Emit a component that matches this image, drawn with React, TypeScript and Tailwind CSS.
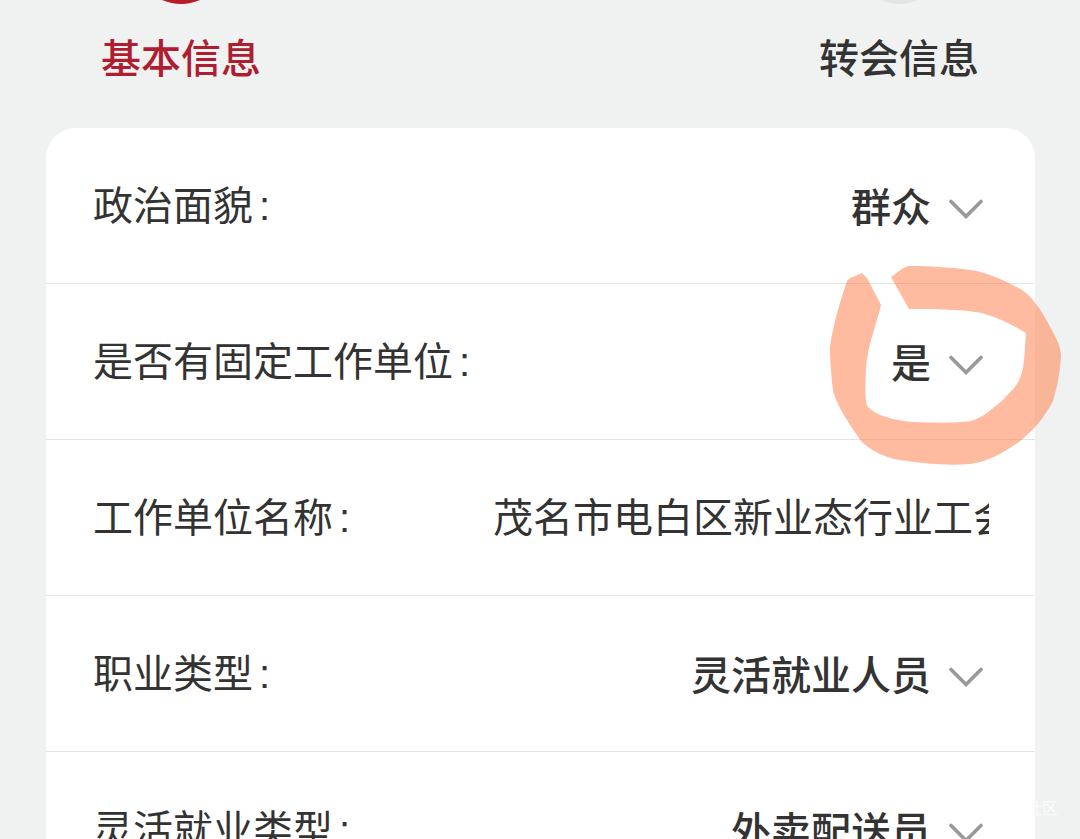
import { useState } from "react";

interface IStep {
  title: string;
  active: boolean;
}

interface IField {
  id: string;
  label: string;
  options: string[];
  text?: boolean;
  marked?: boolean;
}

const steps: IStep[] = [
  { title: "基本信息", active: true },
  { title: "转会信息", active: false },
];

const fields: IField[] = [
  { id: "political", label: "政治面貌", options: ["群众", "共青团员", "中共党员"] },
  { id: "fixedUnit", label: "是否有固定工作单位", options: ["是", "否"], marked: true },
  { id: "unitName", label: "工作单位名称", options: ["茂名市电白区新业态行业工会"], text: true },
  { id: "jobType", label: "职业类型", options: ["灵活就业人员", "其他"] },
  { id: "flexibleType", label: "灵活就业类型", options: ["外卖配送员", "快递员", "网约车司机"] },
];

const Chevron = () => (
  <svg
    className="pointer-events-none col-start-1 row-start-1 mr-[5px] mt-2 h-5 w-9 justify-self-end"
    viewBox="0 0 36 20"
    fill="none"
    stroke="#999999"
    strokeWidth="3.6"
    strokeLinecap="round"
    aria-hidden="true"
  >
    <path d="M3 2.5 18 17.5 33 2.5" />
  </svg>
);

// hand drawn highlighter ring over the selected answer
const Marker = () => (
  <svg
    className="pointer-events-none absolute -right-7 -top-5 z-10 h-[204px] w-[236px]"
    viewBox="0 0 236 204"
    fill="#ff7740"
    fillOpacity="0.5"
    aria-hidden="true"
  >
    <path d="M20 17 C23 13 29 12 35 9 L40 14 L54 41 C49 62 40 83 39 105 C38 120 38 135 40 142 C49 152 66 156 86 158 C108 159 132 159 144 157 C157 153 166 144 176 136 C190 121 192 120 196 104 C198 92 198 79 199 69 C186 61 174 55 158 50 C140 45 105 45 82 45 L64 13 C70 9 76 3 82 2 C105 2 133 4 150 7 C166 11 181 18 195 26 C204 32 213 44 221 59 C229 74 233 80 234 91 C233 109 230 124 226 137 C217 154 206 167 192 178 C175 189 163 197 143 200 C120 202 93 199 72 196 C56 193 43 186 34 177 C22 160 10 142 6 127 C4 110 3 95 3 83 C6 61 12 41 20 17 Z" />
  </svg>
);

const FieldRow = ({ field }: { field: IField }) => {
  const [value, setValue] = useState<string>(field.options[0]);

  return (
    <div className="relative flex h-[156px] items-center justify-between border-b border-[#e3e4e4] pb-1.5 pl-[47px] pr-[46px]">
      <label htmlFor={field.id} className="shrink-0 whitespace-nowrap">
        {field.label}
        <span className="ml-1.5 font-['Liberation_Sans',sans-serif] leading-none">
          :
        </span>
      </label>
      {field.text ? (
        <input
          id={field.id}
          type="text"
          value={value}
          onChange={(e) => setValue(e.target.value)}
          className="w-[496px] bg-transparent outline-none"
        />
      ) : (
        <div className="grid flex-1 items-center pt-1">
          <select
            id={field.id}
            value={value}
            onChange={(e) => setValue(e.target.value)}
            className="col-start-1 row-start-1 w-full appearance-none bg-transparent pr-[58px] font-medium outline-none [text-align-last:right]"
          >
            {field.options.map((option) => (
              <option key={option}>{option}</option>
            ))}
          </select>
          <Chevron />
        </div>
      )}
      {field.marked && <Marker />}
    </div>
  );
};

const App = () => {
  return (
    <div className="relative h-screen overflow-hidden bg-[#f0f2f1] font-['Noto_Sans_CJK_SC',sans-serif] text-[40px] leading-[60px] text-[#333333]">
      <ol className="flex justify-between px-[101px]">
        {steps.map((step) => (
          <li key={step.title} className="flex flex-col items-center">
            <div className="flex h-1 items-end overflow-hidden">
              <div
                className={
                  step.active
                    ? "size-24 shrink-0 rounded-full bg-[#b81c2b]"
                    : "size-24 shrink-0 rounded-full bg-[#e3e4e4]"
                }
              />
            </div>
            <span
              className={
                step.active
                  ? "mt-[22px] font-medium text-[#ae1e30]"
                  : "mt-[22px] font-medium"
              }
            >
              {step.title}
            </span>
          </li>
        ))}
      </ol>
      <form className="ml-[46px] mr-[45px] mt-[42px] rounded-t-[30px] bg-white">
        {fields.map((field) => (
          <FieldRow key={field.id} field={field} />
        ))}
      </form>
      <span className="absolute bottom-[22px] right-[22px] text-base leading-5 text-white/70">
        社区
      </span>
    </div>
  );
};

export default App;
